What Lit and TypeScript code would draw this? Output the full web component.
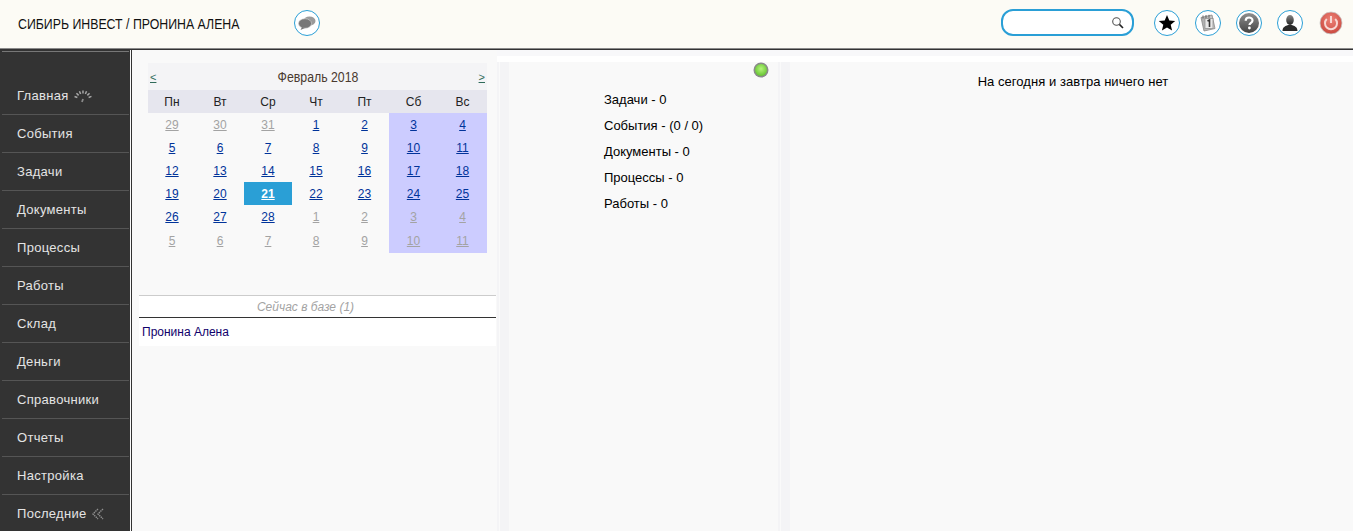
import { LitElement, html, css, svg } from "lit";
import { customElement } from "lit/decorators.js";

const MENU = ["Главная","События","Задачи","Документы","Процессы","Работы","Склад","Деньги","Справочники","Отчеты","Настройка","Последние"];
const WEEK = ["Пн","Вт","Ср","Чт","Пт","Сб","Вс"];
const DAYS: [number, boolean][] = [
  [29,true],[30,true],[31,true],[1,false],[2,false],[3,false],[4,false],
  [5,false],[6,false],[7,false],[8,false],[9,false],[10,false],[11,false],
  [12,false],[13,false],[14,false],[15,false],[16,false],[17,false],[18,false],
  [19,false],[20,false],[21,false],[22,false],[23,false],[24,false],[25,false],
  [26,false],[27,false],[28,false],[1,true],[2,true],[3,true],[4,true],
  [5,true],[6,true],[7,true],[8,true],[9,true],[10,true],[11,true],
];
const COUNTS = ["Задачи - 0","События - (0 / 0)","Документы - 0","Процессы - 0","Работы - 0"];

const ticks = [0,1,2,3,4,5,6].map((i) => {
  const a = (-160 + i * 23.3) * Math.PI / 180;
  const x1 = 9 + Math.cos(a) * 6, y1 = 10.5 + Math.sin(a) * 6;
  const x2 = 9 + Math.cos(a) * 9, y2 = 10.5 + Math.sin(a) * 9;
  return svg`<line x1=${x1} y1=${y1} x2=${x2} y2=${y2} stroke="#a8a8a8" stroke-width="1.5"/>`;
});

@customElement("app-root")
export class AppRoot extends LitElement {
  static styles = css`
    :host { display: block; height: 531px; overflow: hidden; font-family: "Liberation Sans", Arial, sans-serif; color: #000; background: #f9f9f9; }
    .top { height: 48px; background: #fcfbf5; display: flex; align-items: center; box-sizing: border-box; padding: 0 0 3px 18px; }
    .title { font-size: 14px; width: 276px; white-space: nowrap; color: #111; margin-top: 3px; flex: none; transform: scaleX(0.88); transform-origin: left center; }
    .spacer { flex: 1; }
    .ring { width: 24px; height: 24px; border: 1px solid #2a9fd6; border-radius: 50%; display: flex; align-items: center; justify-content: center; background: #fff; flex: none; }
    .ring svg, .power svg { display: block; }
    .search { height: 23px; width: 121px; border: 2px solid #2a9fd6; border-radius: 12px; background: #fff; display: flex; align-items: center; justify-content: flex-end; padding-right: 8px; margin-right: 20px; flex: none; }
    .icons { display: flex; gap: 15px; align-items: center; padding-right: 9px; }
    .power { width: 26px; height: 26px; }
    .rule { height: 2px; background: linear-gradient(#8a8a8a 0 1px, #333 1px 2px); }
    .body { display: flex; height: 481px; }
    .side { width: 130px; flex: none; background: #333; box-sizing: border-box; padding-top: 27px; overflow: hidden; position: relative; }
    .side::before { content: ""; position: absolute; left: 2px; right: 1px; top: 1px; height: 1px; background: #777; }
    .item { height: 38px; box-sizing: border-box; margin-left: 2px; margin-right: 1px; border-bottom: 1px solid #555; padding-left: 15px; display: flex; align-items: center; gap: 5px; color: #e4e4e4; font-size: 13px; letter-spacing: 0.3px; }
    .divider { width: 1px; flex: none; background: #333; margin-left: 1px; }
    .main { flex: 1; display: flex; min-width: 0; background: #f9f9f9; }
    .left { width: 365px; flex: none; box-sizing: border-box; padding: 13px 0 0 7px; }
    .cal { width: 339px; margin-left: 9px; font-size: 12px; }
    .cal-head { height: 27px; background: #f4f4f6; display: flex; align-items: center; justify-content: space-between; padding: 0 2px; color: #4a3a30; }
    .month { font-size: 14px; transform: scaleX(0.88); }
    .nav { font-size: 11px; color: #2f6b5a; text-decoration: underline; }
    .grid { display: grid; grid-template-columns: 48px 48px 48px 48px 49px 49px 49px; grid-template-rows: repeat(6, 23px) 25px; }
    .wd { background: #e6e6ee; display: flex; align-items: center; justify-content: center; color: #222; }
    .d { display: flex; align-items: center; justify-content: center; color: #00339a; text-decoration: underline; }
    .d.we { background: #ccccff; }
    .d.off { color: #a3a3a3; }
    .d.today { background: #2a9fd6; color: #fff; font-weight: bold; }
    .base { margin-top: 42px; width: 357px; background: #fff; font-size: 12px; }
    .base-head { height: 21px; border-top: 1px solid #ccc; border-bottom: 1px solid #333; display: flex; align-items: center; justify-content: center; color: #a3a3a3; font-style: italic; padding-right: 24px; }
    .base-row { height: 28px; display: flex; align-items: center; padding-left: 3px; color: #10006b; }
    .rest { flex: 1; min-width: 0; display: flex; flex-direction: column; padding-top: 6px; background: #f8f8fa; }
    .cols { flex: 1; display: flex; border-top: 6px solid #fff; min-height: 0; }
    .strip { width: 12px; flex: none; background: linear-gradient(90deg, #f4f4f6 0 2px, #fafafa 2px 3px, #f4f4f6 3px); }
    .mid { width: 269px; flex: none; background: #f9f9f9; position: relative; box-sizing: border-box; padding: 25px 0 0 95px; font-size: 13px; }
    .mid div { height: 26px; line-height: 26px; white-space: nowrap; }
    .led { position: absolute; right: 9px; top: 0; display: block; }
    .right { flex: 1; background: #f9f9f9; font-size: 13px; box-sizing: border-box; padding-top: 12px; text-align: center; letter-spacing: 0.05px; }
    .right span { display: block; width: 566px; }
  `;

  render() {
    return html`
      <div class="top">
        <div class="title">СИБИРЬ ИНВЕСТ / ПРОНИНА АЛЕНА</div>
        <div class="ring">
          <svg width="20" height="20" viewBox="0 0 20 20"><ellipse cx="12.500" cy="8" rx="6" ry="4.500" fill="#9a9a9a"/><ellipse cx="8" cy="10.500" rx="6.500" ry="4.800" fill="#777" stroke="#d8d8d8" stroke-width=".6"/><path d="M5 14l-1.500 3 4.500-2z" fill="#777"/></svg>
        </div>
        <div class="spacer"></div>
        <div class="search">
          <svg width="13" height="13" viewBox="0 0 13 13"><circle cx="5.500" cy="5.500" r="3.800" fill="none" stroke="#555" stroke-width="1.100"/><line x1="8.400" y1="8.400" x2="12" y2="12" stroke="#222" stroke-width="1.600"/></svg>
        </div>
        <div class="icons">
          <div class="ring"><svg width="20" height="20" viewBox="0 0 20 20"><path d="M10 2l2.300 5.400 5.900.5-4.500 3.900 1.400 5.800L10 14.500l-5.100 3.100 1.400-5.800L1.800 7.900l5.900-.5z" fill="#000"/></svg></div>
          <div class="ring"><svg width="20" height="20" viewBox="0 0 20 20"><defs><linearGradient id="c" x1="0" y1="0" x2="1" y2="0"><stop offset="0" stop-color="#aaa"/><stop offset="1" stop-color="#d0d0d0"/></linearGradient></defs><path d="M3 4.500L14 2l3 13.500L6 18z" fill="url(#c)" stroke="#888" stroke-width=".8"/><path d="M5 2.500v3M8 2v3M11 1.800v3" stroke="#666" stroke-width="1"/><rect x="7" y="5.500" width="8" height="10" fill="#e8e8e8" stroke="#888" stroke-width=".7"/><path d="M9.500 8l2-1v7" fill="none" stroke="#333" stroke-width="1.600"/></svg></div>
          <div class="ring"><svg width="22" height="22" viewBox="0 0 22 22"><defs><linearGradient id="q" x1="0" y1="0" x2="0" y2="1"><stop offset="0" stop-color="#8f8f8f"/><stop offset="1" stop-color="#444"/></linearGradient></defs><circle cx="11" cy="11" r="10" fill="url(#q)"/><path d="M7.700 8.700c0-4.200 6.800-4.200 6.800-.2 0 2.400-3 2.400-3 4.600" fill="none" stroke="#fff" stroke-width="2.200"/><circle cx="11.400" cy="16" r="1.400" fill="#fff"/></svg></div>
          <div class="ring"><svg width="20" height="20" viewBox="0 0 20 20"><defs><linearGradient id="u" x1="0" y1="0" x2="0" y2="1"><stop offset="0" stop-color="#888"/><stop offset="1" stop-color="#222"/></linearGradient></defs><ellipse cx="10" cy="7" rx="3.800" ry="5" fill="url(#u)"/><path d="M2.500 18c0-4 3-5 5.500-6h4c2.500 1 5.500 2 5.500 6z" fill="#2a2a2a"/></svg></div>
          <div class="power"><svg width="26" height="26" viewBox="0 0 26 26"><defs><radialGradient id="p" cx=".5" cy=".35" r=".7"><stop offset="0" stop-color="#ee8378"/><stop offset="1" stop-color="#c7443a"/></radialGradient></defs><circle cx="13" cy="13" r="11" fill="url(#p)" stroke="#c8c8c8" stroke-width=".8"/><path d="M8.800 9a6 6 0 1 0 8.400 0" fill="none" stroke="#f8d8d4" stroke-width="2"/><line x1="13" y1="6" x2="13" y2="13" stroke="#f8d8d4" stroke-width="2"/></svg></div>
        </div>
      </div>
      <div class="rule"></div>
      <div class="body">
        <nav class="side">
          ${MENU.map((m, i) => html`<div class="item">${m}
            ${i === 0 ? html`<svg width="18" height="14" viewBox="0 0 18 14">${ticks}<line x1="9" y1="10" x2="8" y2="13" stroke="#8a8a8a" stroke-width="1.800"/></svg>` : ""}
            ${i === 11 ? html`<svg width="12" height="12" viewBox="0 0 12 12"><path d="M6 1L1 6l5 5M11 1L6 6l5 5" fill="none" stroke="#8f8f8f" stroke-width="1.400" stroke-dasharray="1.500 .7"/></svg>` : ""}
          </div>`)}
        </nav>
        <div class="divider"></div>
        <div class="main">
          <section class="left">
            <div class="cal">
              <div class="cal-head"><span class="nav">&lt;</span><span class="month">Февраль 2018</span><span class="nav">&gt;</span></div>
              <div class="grid">
                ${WEEK.map((w) => html`<div class="wd">${w}</div>`)}
                ${DAYS.map(([n, off], i) => html`<div class="d ${i % 7 >= 5 ? "we" : ""} ${off ? "off" : ""} ${i === 23 ? "today" : ""}">${n}</div>`)}
              </div>
            </div>
            <div class="base">
              <div class="base-head">Сейчас в базе (1)</div>
              <div class="base-row">Пронина Алена</div>
            </div>
          </section>
          <div class="rest">
            <div class="cols">
              <div class="strip"></div>
              <section class="mid">
                <svg class="led" width="16" height="16" viewBox="0 0 16 16"><defs><radialGradient id="g" cx=".5" cy=".4" r=".6"><stop offset="0" stop-color="#b5f57a"/><stop offset="1" stop-color="#66c433"/></radialGradient></defs><circle cx="8" cy="8" r="7.500" fill="#8a8a8a"/><circle cx="8" cy="8" r="6" fill="url(#g)"/></svg>
                ${COUNTS.map((c) => html`<div>${c}</div>`)}
              </section>
              <div class="strip"></div>
              <section class="right"><span>На сегодня и завтра ничего нет</span></section>
            </div>
          </div>
        </div>
      </div>
    `;
  }
}
